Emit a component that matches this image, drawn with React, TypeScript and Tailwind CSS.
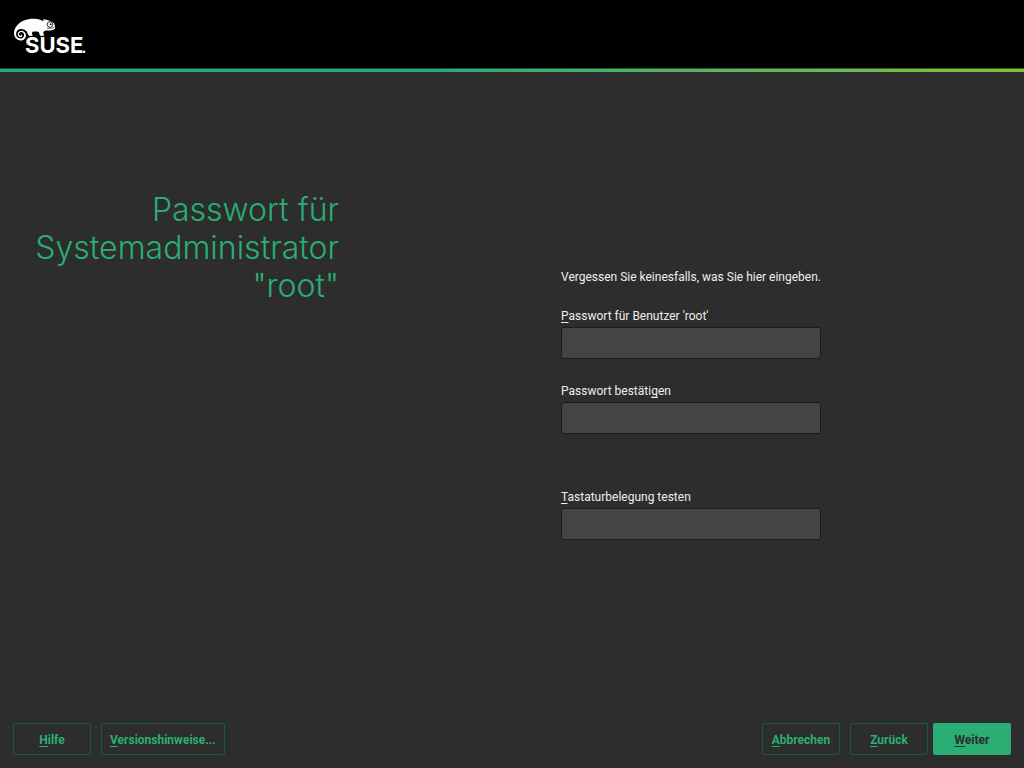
import type { ReactNode } from 'react';

function Mnemonic({ children }: { children: ReactNode }) {
  return <span className="underline decoration-1 underline-offset-2 [text-decoration-skip-ink:none]">{children}</span>;
}

function Logo() {
  return (
    <svg width="80" height="48" viewBox="12 16 80 48" role="img" aria-label="SUSE" className="block">
      <path
        fill="#fff"
        d="M14 33.5C13.8 28 18 23 24 20.5C29 18.3 36 18.4 40 19.8C41.5 20.4 42.6 21 43.5 21.2L43.2 19.2C47.5 19.6 52 21.2 54 23.3C54.8 24.8 55.2 26.6 55 28.4C53.5 30.2 50 30.7 46.5 30.4C44.2 30.3 43.2 31.8 43.2 33.2C43.4 34 44.2 34.3 44.3 35.6L41 35.9C39.6 35.6 39.5 33.8 38.7 31.9C37 31.4 34.2 31.3 32.6 31.7C31.7 33 31.8 34.2 33 35.7L29.5 35.9C27.8 34.9 27.6 33 26.8 31.4C25 29.5 22 28.4 19.3 29.3C16.1 30.4 15.3 34.3 17.1 36.8C19 39.2 22.7 38.8 23.8 36.4C24.8 34 23.2 31.7 21 31.9C19.1 32.1 18.4 34.3 19.7 35.4C20.7 36.1 21.8 35.2 21.5 34.2C22.9 34.7 22.5 37 20.8 37.2C18.6 37.5 17.3 35.2 17.9 33.2C18.6 30.8 21.5 29.9 23.8 31.4C27 33.5 26.5 38.3 23.2 39.9C18.8 41.8 14.3 38.4 14 33.5Z"
      />
      <circle cx="50" cy="24.5" r="2.8" fill="#fff" stroke="#000" strokeWidth="0.8" />
      <ellipse cx="50.7" cy="24.2" rx="1.2" ry="0.8" fill="#000" />
      <path d="M47 28.3C50 28.7 53 28.2 54.4 26.8" fill="none" stroke="#000" strokeWidth="0.6" />
      <text
        x="25"
        y="53"
        fontSize="22"
        fontWeight="700"
        fill="#fff"
        stroke="#000"
        strokeWidth="2"
        paintOrder="stroke"
        fontFamily="Inter, sans-serif"
      >
        SUSE
      </text>
      <circle cx="84" cy="51.8" r="1.3" fill="#fff" />
    </svg>
  );
}

function Field({ id, type, label }: { id: string; type: string; label: ReactNode }) {
  return (
    <div className="flex flex-col gap-[3px]">
      <label htmlFor={id}>{label}</label>
      <input
        id={id}
        type={type}
        className="h-8 w-full rounded-[3px] border border-[#1b1b1b] bg-[#444444] px-2 text-[#eeeeee] outline-none"
      />
    </div>
  );
}

function Button({ primary = false, children }: { primary?: boolean; children: ReactNode }) {
  return (
    <button
      type="button"
      className={`h-8 min-w-[78px] rounded-[2px] border px-2 pt-px font-bold ${
        primary ? 'border-[#2aae74] bg-[#2aae74] text-[#2d2d2d]' : 'border-[#175c41] text-[#2aae74]'
      }`}
    >
      {children}
    </button>
  );
}

export default function App() {
  return (
    <div className="flex min-h-screen flex-col bg-[#2d2d2d] font-['Roboto',sans-serif] text-xs text-[#eeeeee]">
      <header className="bg-black">
        <div className="px-3 pt-4 pb-1">
          <Logo />
        </div>
        <div className="bg-linear-to-r from-[#22a87b] from-40% to-[#82c036]">
          <div className="h-px bg-black/50" />
          <div className="h-[3px]" />
        </div>
      </header>

      <main className="flex grow">
        <div className="w-[342px] shrink-0 pt-[119px] pr-[3px] pl-4">
          <h1 className="text-right font-['Inter',sans-serif] text-[32px] leading-[38px] font-light text-[#2aae74]">
            Passwort für Systemadministrator "root"
          </h1>
        </div>
        <form className="flex grow flex-col items-center pt-[197px] pl-4">
          <div className="flex w-[260px] flex-col">
            <p className="mb-[23px] whitespace-nowrap">Vergessen Sie keinesfalls, was Sie hier eingeben.</p>
            <div className="flex flex-col gap-6">
              <Field id="password" type="password" label={<><Mnemonic>P</Mnemonic>asswort für Benutzer 'root'</>} />
              <Field id="confirm" type="password" label={<>Passwort bestäti<Mnemonic>g</Mnemonic>en</>} />
            </div>
            <div className="mt-[55px]">
              <Field id="keyboard" type="text" label={<><Mnemonic>T</Mnemonic>astaturbelegung testen</>} />
            </div>
          </div>
        </form>
      </main>

      <footer className="flex justify-between p-[13px]">
        <div className="flex gap-2.5">
          <Button><Mnemonic>H</Mnemonic>ilfe</Button>
          <Button><Mnemonic>V</Mnemonic>ersionshinweise...</Button>
        </div>
        <div className="flex gap-[5px]">
          <div className="flex gap-2.5">
            <Button><Mnemonic>A</Mnemonic>bbrechen</Button>
            <Button><Mnemonic>Z</Mnemonic>urück</Button>
          </div>
          <Button primary><Mnemonic>W</Mnemonic>eiter</Button>
        </div>
      </footer>
    </div>
  );
}
